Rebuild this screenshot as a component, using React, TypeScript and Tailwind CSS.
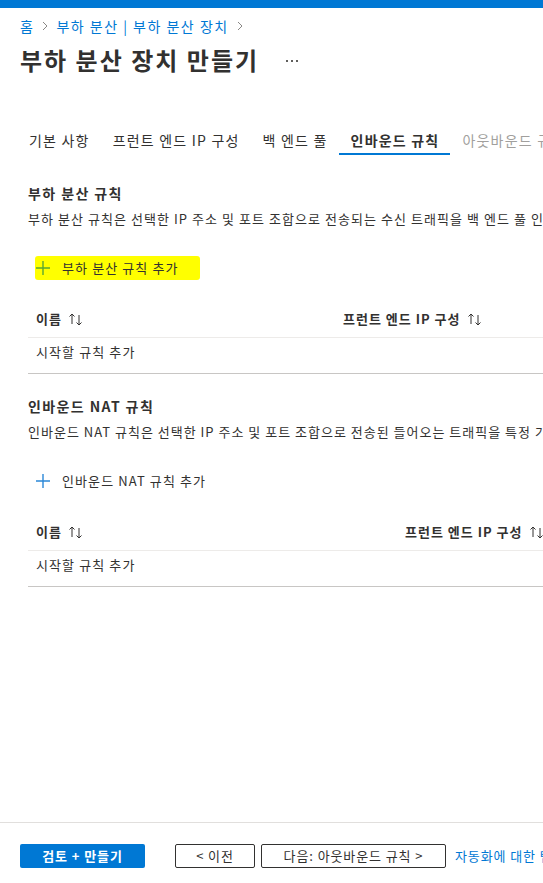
import React from 'react';

const FONT = 'font-["Noto_Sans_CJK_KR","Noto_Sans",sans-serif]';

function Chevron() {
  return (
    <svg width="6" height="10" viewBox="0 0 6 10" className="mx-[8px] shrink-0">
      <path d="M1 1l4 4-4 4" fill="none" stroke="#8a8886" strokeWidth="1" />
    </svg>
  );
}

function SortIcon() {
  return (
    <svg width="16" height="14" viewBox="0 0 16 14" className="ml-[6px] shrink-0">
      <path d="M4 12V2M1.5 4.5L4 2l2.5 2.5" fill="none" stroke="#323130" strokeWidth="1" />
      <path d="M11 3v10M8.5 10.5L11 13l2.5-2.5" fill="none" stroke="#323130" strokeWidth="1" />
    </svg>
  );
}

function Plus({ color }: { color: string }) {
  return (
    <svg width="14" height="14" viewBox="0 0 14 14" className="shrink-0">
      <path d="M7 0v14M0 7h14" fill="none" stroke={color} strokeWidth="1.4" />
    </svg>
  );
}

interface SectionProps {
  title: string;
  desc: string;
  descTracking: string;
  addLabel: string;
  highlight?: boolean;
  colWidth: string;
}

function RuleSection({ title, desc, descTracking, addLabel, highlight, colWidth }: SectionProps) {
  return (
    <section className="pl-[28px]">
      {/* Heading + description */}
      <h2 className="text-[14px] leading-[20px] font-semibold tracking-[1.4px]">{title}</h2>
      <p className={`mt-[6px] text-[13px] leading-[20px] whitespace-nowrap ${descTracking}`}>{desc}</p>

      {/* Add button */}
      <div className="mt-[27px] h-[24px] flex">
        <button
          className={`ml-[7px] h-[24px] flex items-center pl-[1px] text-[13px] tracking-[1.1px] ${
            highlight ? 'bg-[#ffff00] w-[165px] rounded-[3px]' : ''
          }`}
        >
          <Plus color={highlight ? '#5aa832' : '#2b88d8'} />
          <span className="ml-[12px] whitespace-nowrap">{addLabel}</span>
        </button>
      </div>

      {/* Table */}
      <div className="mt-[21px] text-[13px] leading-[20px] tracking-[1px]">
        <div className="h-[37px] flex items-center border-b border-[#edebe9] pl-[8px] font-semibold whitespace-nowrap">
          <div className={`${colWidth} shrink-0 flex items-center`}>
            이름
            <SortIcon />
          </div>
          <div className="flex items-center shrink-0">
            프런트 엔드 IP 구성
            <SortIcon />
          </div>
        </div>
        <div className="h-[36px] pt-[4px] pl-[8px] border-b border-[#c8c6c4] tracking-[1.1px]">시작할 규칙 추가</div>
      </div>
    </section>
  );
}

export default function App() {
  const tabs = [
    { label: '기본 사항' },
    { label: '프런트 엔드 IP 구성' },
    { label: '백 엔드 풀' },
    { label: '인바운드 규칙', active: true },
    { label: '아웃바운드 규칙', disabled: true },
  ];

  return (
    <div className={`${FONT} h-[883px] w-[543px] overflow-hidden bg-white text-[#323130] flex flex-col`}>
      <div className="h-[8px] bg-[#0078d4] shrink-0" />

      {/* Header */}
      <header className="px-[20px] pt-[8px]">
        <nav className="flex items-center text-[14px] leading-[20px] text-[#0078d4] whitespace-nowrap tracking-[1.5px]">
          <span>홈</span>
          <Chevron />
          <span>부하 분산 | 부하 분산 장치</span>
          <Chevron />
        </nav>
        <div className="mt-[8px] flex items-center">
          <h1 className="text-[24px] leading-[32px] font-semibold tracking-[2px] whitespace-nowrap">부하 분산 장치 만들기</h1>
          <svg width="12" height="4" viewBox="0 0 12 4" className="ml-[27px] mt-[2px] shrink-0">
            <rect x="0" y="1" width="2" height="2" fill="#605e5c" />
            <rect x="5" y="1" width="2" height="2" fill="#605e5c" />
            <rect x="10" y="1" width="2" height="2" fill="#605e5c" />
          </svg>
        </div>
      </header>

      {/* Tabs */}
      <div className="mt-[46px] pl-[17px] flex whitespace-nowrap text-[14px] leading-[20px] tracking-[1.2px]">
        {tabs.map((t) => (
          <div
            key={t.label}
            className={`shrink-0 pl-[12px] pr-[11px] pt-[8px] pb-[3px] border-b-2 ${
              t.active ? 'border-[#0078d4] font-semibold' : 'border-transparent'
            } ${t.disabled ? 'text-[#a19f9d]' : ''}`}
          >
            {t.label}
          </div>
        ))}
      </div>

      <div className="mt-[28px]">
        <RuleSection
          title="부하 분산 규칙"
          desc="부하 분산 규칙은 선택한 IP 주소 및 포트 조합으로 전송되는 수신 트래픽을 백 엔드 풀 인스턴스 그룹에 배포합니다."
          descTracking="tracking-[1.05px]"
          addLabel="부하 분산 규칙 추가"
          highlight
          colWidth="w-[307px]"
        />
      </div>

      <div className="mt-[22px]">
        <RuleSection
          title="인바운드 NAT 규칙"
          desc="인바운드 NAT 규칙은 선택한 IP 주소 및 포트 조합으로 전송된 들어오는 트래픽을 특정 가상 머신으로 전달합니다."
          descTracking="tracking-[1px]"
          addLabel="인바운드 NAT 규칙 추가"
          colWidth="w-[369px]"
        />
      </div>

      <div className="flex-1" />

      {/* Footer */}
      <footer className="border-t border-[#e1dfdd] pt-[21px] pb-[15px] pl-[20px] flex items-center whitespace-nowrap text-[13px] tracking-[0.9px]">
        <button className="shrink-0 w-[125px] h-[24px] rounded-[2px] bg-[#0078d4] text-white font-semibold">
          검토 + 만들기
        </button>
        <button className="shrink-0 ml-[30px] w-[80px] h-[24px] rounded-[2px] border border-[#323130]">&lt; 이전</button>
        <button className="shrink-0 ml-[6px] w-[185px] h-[24px] rounded-[2px] border border-[#323130]">
          다음: 아웃바운드 규칙 &gt;
        </button>
        <a className="shrink-0 ml-[9px] text-[#0078d4]">자동화에 대한 템플릿 다운로드</a>
      </footer>
    </div>
  );
}
